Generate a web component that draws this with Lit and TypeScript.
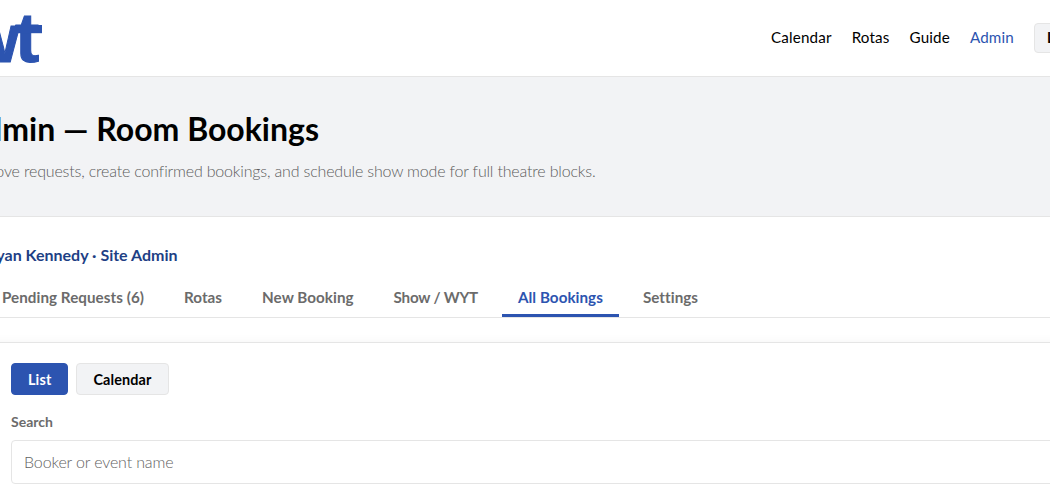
import { LitElement, html, css } from "lit";
import { customElement, state } from "lit/decorators.js";

const TABS = ["Pending Requests (6)", "Rotas", "New Booking", "Show / WYT", "All Bookings", "Settings"];
const LINKS = ["Calendar", "Rotas", "Guide", "Admin"];

@customElement("app-root")
export class AppRoot extends LitElement {
  @state() private tab = "All Bookings";
  @state() private view = "List";

  static styles = css`
    :host { display: block; width: 100%; height: 493px; overflow: hidden; background: #fff; color: #000;
      font-family: Lato, "Liberation Sans", sans-serif; font-size: 16px; }
    * { box-sizing: border-box; }
    .page { margin-left: -14px; width: 1140px; }
    header { height: 77px; border-bottom: 1px solid #e5e5e5; display: flex; justify-content: space-between; }
    .logo { display: block; width: 60px; height: 76px; overflow: hidden; fill: #2c54b0; }
    .logo text { font-family: "Liberation Sans", Arial, sans-serif; font-weight: 700; stroke: #2c54b0; stroke-width: 1; }
    nav { display: flex; align-items: center; gap: 20px; width: 355px; height: 74px; white-space: nowrap; flex: none; }
    nav a { font-size: 15.2px; line-height: 24px; letter-spacing: 0.16px; }
    nav a.on { color: #2c54b0; }
    button { font: 700 14.4px/20px Lato, sans-serif; height: 32px; padding: 1px 16px 0; border: 1px solid #e5e5e5;
      border-radius: 4px; background: #f2f3f5; color: #000; letter-spacing: 0.14px; }
    nav button { height: 30px; padding: 0 12px; margin-top: 2px; }
    .hero { height: 140px; background: #f2f3f5; border-bottom: 1px solid #e5e5e5; padding-top: 32px; }
    .lead { display: flex; flex-direction: column; align-items: flex-start; white-space: nowrap; }
    h1 { margin: 0; width: 333px; font-size: 32px; line-height: 40px; font-weight: 700; display: flex; justify-content: flex-end; }
    .sub { margin: 10px 0 0; width: 609.5px; line-height: 24px; font-weight: 300; color: #5c5c5c; letter-spacing: -0.17px;
      display: flex; justify-content: flex-end; }
    .user { margin-top: 26px; width: 191.5px; line-height: 24px; font-weight: 700; color: #1e3f85; display: flex; justify-content: flex-end; white-space: nowrap; }
    .tabs { display: flex; gap: 8px; height: 51px; border-bottom: 1px solid #e5e5e5; }
    .tab { padding: 19px 16px 0; height: 50px; font-size: 15.2px; line-height: 22px; letter-spacing: 0.05px; font-weight: 700; color: #6b6b6b;
      border-bottom: 3px solid transparent; white-space: nowrap; }
    .tab.tight { letter-spacing: -0.22px; }
    .tab.on { color: #2c54b0; border-color: #2c54b0; }
    .card { margin-top: 24px; height: 300px; padding: 20px 24px; border: 1px solid #e5e5e5; background: #fff;
      box-shadow: 0 2px 12px rgba(0, 0, 0, 0.06); }
    .views { display: flex; gap: 8px; }
    .views button + button { padding-right: 16.6px; }
    .views .on { background: #2c54b0; border-color: #2c54b0; color: #fff; }
    label { display: block; margin-top: 17px; font-size: 14px; line-height: 20px; font-weight: 700; color: #6b6b6b; }
    input { display: block; margin-top: 8px; width: 100%; height: 44px; padding: 0 12px 2px; border: 1px solid #e5e5e5;
      border-radius: 4px; font: 300 16px/24px Lato, sans-serif; letter-spacing: -0.14px; background: #fff; }
    input::placeholder { color: #626262; opacity: 1; }
  `;

  render() {
    return html`<div class="page">
      <header>
        <svg class="logo" viewBox="0 0 60 76" role="img" aria-label="wyt">
          <text x="-20" y="62" font-size="69">w</text>
          <text transform="translate(29 62.3) scale(1.06 1.02)" x="0" y="0" font-size="69">t</text>
          <rect x="29" y="25" width="27" height="8.2" />
        </svg>
        <nav>${LINKS.map((l) => html`<a class=${l === "Admin" ? "on" : ""}>${l}</a>`)}<button>Log out</button></nav>
      </header>
      <section class="hero"><div class="lead">
        <h1>Admin — Room Bookings</h1>
        <p class="sub">Approve requests, create confirmed bookings, and schedule show mode for full theatre blocks.</p>
      </div></section>
      <div class="user">Ryan Kennedy · Site Admin</div>
      <div class="tabs">${TABS.map((t) => html`<div class="tab ${t === this.tab ? "on" : ""} ${t.includes("WYT") ? "tight" : ""}" @click=${() => (this.tab = t)}>${t}</div>`)}</div>
      <section class="card">
        <div class="views">${["List", "Calendar"].map((v) => html`<button class=${v === this.view ? "on" : ""} @click=${() => (this.view = v)}>${v}</button>`)}</div>
        <label for="q">Search</label>
        <input id="q" placeholder="Booker or event name" />
      </section>
    </div>`;
  }
}
